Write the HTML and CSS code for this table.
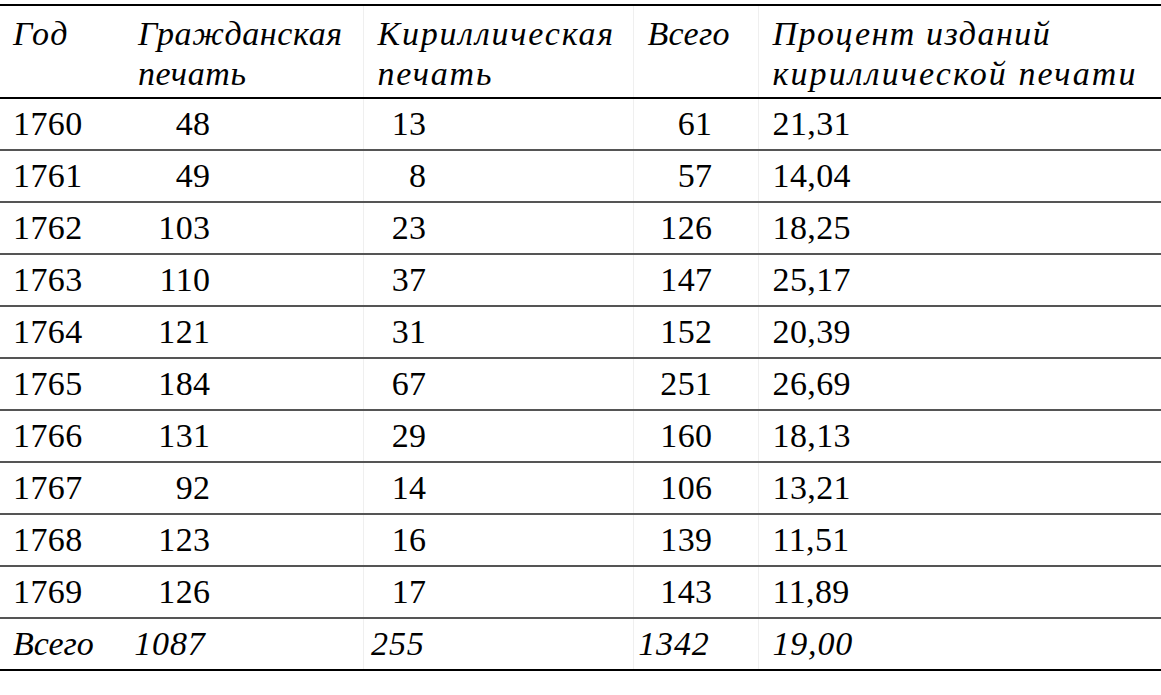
FILE: index.html
```html
<!DOCTYPE html>
<html lang="ru">
<head>
<meta charset="utf-8">
<title>Издания 1760–1769</title>
<link rel="stylesheet" href="styles.css">
</head>
<body>
<table class="tbl">
  <colgroup>
    <col class="w1"><col class="w2"><col class="w3"><col class="w4"><col class="w5">
  </colgroup>
  <thead>
    <tr>
      <th class="h1">Год</th>
      <th class="h2">Гражданская<br>печать</th>
      <th class="h3">Кириллическая<br>печать</th>
      <th class="h4">Всего</th>
      <th class="h5">Процент изданий<br><span class="wide">кириллической печати</span></th>
    </tr>
  </thead>
  <tbody>
    <tr><td class="c1">1760</td><td class="c2">48</td><td class="c3">13</td><td class="c4">61</td><td class="c5">21,31</td></tr>
    <tr><td class="c1">1761</td><td class="c2">49</td><td class="c3">8</td><td class="c4">57</td><td class="c5">14,04</td></tr>
    <tr><td class="c1">1762</td><td class="c2">103</td><td class="c3">23</td><td class="c4">126</td><td class="c5">18,25</td></tr>
    <tr><td class="c1">1763</td><td class="c2">110</td><td class="c3">37</td><td class="c4">147</td><td class="c5">25,17</td></tr>
    <tr><td class="c1">1764</td><td class="c2">121</td><td class="c3">31</td><td class="c4">152</td><td class="c5">20,39</td></tr>
    <tr><td class="c1">1765</td><td class="c2">184</td><td class="c3">67</td><td class="c4">251</td><td class="c5">26,69</td></tr>
    <tr><td class="c1">1766</td><td class="c2">131</td><td class="c3">29</td><td class="c4">160</td><td class="c5">18,13</td></tr>
    <tr><td class="c1">1767</td><td class="c2">92</td><td class="c3">14</td><td class="c4">106</td><td class="c5">13,21</td></tr>
    <tr><td class="c1">1768</td><td class="c2">123</td><td class="c3">16</td><td class="c4">139</td><td class="c5">11,51</td></tr>
    <tr><td class="c1">1769</td><td class="c2">126</td><td class="c3">17</td><td class="c4">143</td><td class="c5">11,89</td></tr>
    <tr class="total"><td class="c1">Всего</td><td class="c2">1087</td><td class="c3">255</td><td class="c4">1342</td><td class="c5">19,00</td></tr>
  </tbody>
</table>
</body>
</html>
```

FILE: styles.css
```css
html, body {
  margin: 0;
  padding: 0;
  background: #fff;
}

body {
  padding-top: 4px;
  font-family: "Liberation Serif", "Times New Roman", serif;
  color: #000;
}

.tbl {
  width: 100%;
  border-collapse: collapse;
  table-layout: fixed;
  border-top: 2px solid #000;
  border-bottom: 2px solid #000;
}

.w1 { width: 124px; }
.w2 { width: 239px; }
.w3 { width: 270px; }
.w4 { width: 125px; }
.w5 { width: auto; }

.tbl th {
  font-style: italic;
  font-weight: normal;
  font-size: 34px;
  letter-spacing: 1.5px;
  line-height: 40px;
  text-align: left;
  vertical-align: top;
  padding: 8px 0 3px 14px;
  border-bottom: 2px solid #000;
  white-space: nowrap;
}

.tbl th.h1 { padding-left: 13px; }
.tbl th.h2 { letter-spacing: 0.6px; }
.tbl th.h3 { letter-spacing: 1.8px; }
.tbl th.h4 { letter-spacing: 0.3px; }
.tbl th .wide { letter-spacing: 2.1px; }

.tbl td {
  font-size: 34px;
  letter-spacing: 0.4px;
  height: 50px;
  line-height: 50px;
  padding: 0;
  border-bottom: 2px solid #555;
  white-space: nowrap;
}

.tbl tr.total td {
  font-style: italic;
  letter-spacing: 0.8px;
  border-bottom: 2px solid #000;
}

.tbl tr.total td.c1 { letter-spacing: 0; }

.h3, .h4, .h5, .c3, .c4, .c5 {
  border-left: 1px solid #efefef;
}

.c1 { padding-left: 13px !important; }
.c2 { text-align: right; padding-right: 152px !important; }
.c3 { text-align: right; padding-right: 206px !important; }
.c4 { text-align: right; padding-right: 45px !important; }
.c5 { padding-left: 14px !important; }

.tbl tr.total .c2 { padding-right: 157px !important; }
.tbl tr.total .c3 { padding-right: 208px !important; }
.tbl tr.total .c4 { padding-right: 48px !important; }
```
